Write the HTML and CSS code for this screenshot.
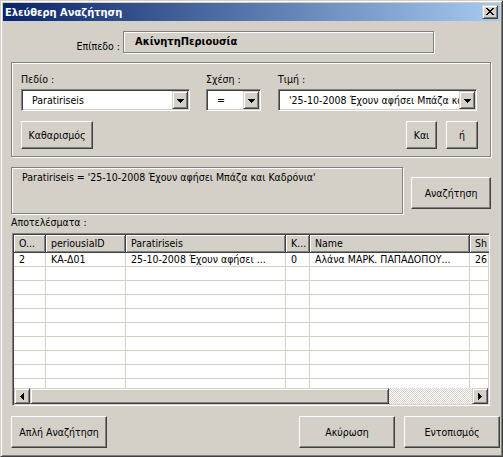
FILE: index.html
```html
<!DOCTYPE html>
<html lang="el">
<head>
  <meta charset="UTF-8" />
  <title>Ελεύθερη Αναζήτηση</title>
  <link rel="stylesheet" href="styles.css">
</head>
<body>
  <div class="window">
    <div class="titlebar">
      <span class="title">Ελεύθερη Αναζήτηση</span>
      <span class="close">
        <svg width="8" height="7" viewBox="0 0 8 7"><path d="M0 0h2v1h-2zM6 0h2v1h-2zM1 1h2v1h-2zM5 1h2v1h-2zM2 2h4v1h-4zM3 3h2v1h-2zM2 4h4v1h-4zM1 5h2v1h-2zM5 5h2v1h-2zM0 6h2v1h-2zM6 6h2v1h-2z"/></svg>
      </span>
    </div>

    <div class="client">
      <div class="level-row">
        <span class="level-label">Επίπεδο :</span>
        <div class="level-box">ΑκίνητηΠεριουσία</div>
      </div>

      <div class="criteria">
        <div class="fields">
          <div class="field">
            <div class="field-label">Πεδίο :</div>
            <div class="combo combo-field">
              <span class="combo-value">Paratiriseis</span>
              <span class="combo-btn"><svg width="7" height="4" viewBox="0 0 7 4"><path d="M0 0H7V1H6V2H5V3H4V4H3V3H2V2H1V1H0Z"/></svg></span>
            </div>
          </div>
          <div class="field">
            <div class="field-label">Σχέση :</div>
            <div class="combo combo-rel">
              <span class="combo-value">=</span>
              <span class="combo-btn"><svg width="7" height="4" viewBox="0 0 7 4"><path d="M0 0H7V1H6V2H5V3H4V4H3V3H2V2H1V1H0Z"/></svg></span>
            </div>
          </div>
          <div class="field">
            <div class="field-label">Τιμή :</div>
            <div class="combo combo-value-box">
              <span class="combo-value">'25-10-2008 Έχουν αφήσει Μπάζα και Καδρόνια'</span>
              <span class="combo-btn"><svg width="7" height="4" viewBox="0 0 7 4"><path d="M0 0H7V1H6V2H5V3H4V4H3V3H2V2H1V1H0Z"/></svg></span>
            </div>
          </div>
        </div>
        <div class="actions">
          <button class="btn btn-clear">Καθαρισμός</button>
          <button class="btn btn-and">Και</button>
          <button class="btn btn-or">ή</button>
        </div>
      </div>

      <div class="query-row">
        <div class="query">Paratiriseis = '25-10-2008 Έχουν αφήσει Μπάζα και Καδρόνια'</div>
        <button class="btn btn-search">Αναζήτηση</button>
      </div>

      <div class="results-label">Αποτελέσματα :</div>

      <div class="list">
        <div class="list-head">
          <div class="hcell">O...</div>
          <div class="hcell">periousiaID</div>
          <div class="hcell">Paratiriseis</div>
          <div class="hcell">K...</div>
          <div class="hcell">Name</div>
          <div class="hcell">Sh</div>
        </div>
        <div class="list-body">
          <div class="lrow"><div>2</div><div>ΚΑ-Δ01</div><div>25-10-2008 Έχουν αφήσει ...</div><div>0</div><div>Αλάνα ΜΑΡΚ. ΠΑΠΑΔΟΠΟΥ...</div><div>26</div></div>
          <div class="lrow"><div></div><div></div><div></div><div></div><div></div><div></div></div>
          <div class="lrow"><div></div><div></div><div></div><div></div><div></div><div></div></div>
          <div class="lrow"><div></div><div></div><div></div><div></div><div></div><div></div></div>
          <div class="lrow"><div></div><div></div><div></div><div></div><div></div><div></div></div>
          <div class="lrow"><div></div><div></div><div></div><div></div><div></div><div></div></div>
          <div class="lrow"><div></div><div></div><div></div><div></div><div></div><div></div></div>
          <div class="lrow"><div></div><div></div><div></div><div></div><div></div><div></div></div>
          <div class="lrow"><div></div><div></div><div></div><div></div><div></div><div></div></div>
          <div class="lrow"><div></div><div></div><div></div><div></div><div></div><div></div></div>
        </div>
        <div class="hscroll">
          <span class="sb-btn"><svg width="4" height="7" viewBox="0 0 4 7"><path d="M4 0V7H3V6H2V5H1V4H0V3H1V2H2V1H3V0Z"/></svg></span>
          <span class="sb-thumb"></span>
          <span class="sb-track"></span>
          <span class="sb-btn"><svg width="4" height="7" viewBox="0 0 4 7"><path d="M0 0V7H1V6H2V5H3V4H4V3H3V2H2V1H1V0Z"/></svg></span>
        </div>
      </div>

      <div class="footer">
        <button class="btn btn-foot">Απλή Αναζήτηση</button>
        <button class="btn btn-foot btn-cancel">Ακύρωση</button>
        <button class="btn btn-foot">Εντοπισμός</button>
      </div>
    </div>
  </div>
</body>
</html>
```

FILE: styles.css
```css
:root {
  --face: #d4d0c8;
  --shadow: #808080;
  --dark: #404040;
  --light: #ffffff;
}

* {
  box-sizing: border-box;
}

body {
  margin: 0;
  background: var(--face);
  font-family: "DejaVu Sans Condensed", "Liberation Sans", Arial, sans-serif;
  font-size: 10.5px;
  color: #000;
}

.window {
  width: 503px;
  height: 457px;
  padding: 2px;
  background: var(--face);
  border: 1px solid;
  border-color: var(--face) var(--dark) var(--dark) var(--face);
  box-shadow: inset 1px 1px 0 var(--light), inset -1px -1px 0 var(--shadow);
  display: flex;
  flex-direction: column;
}

/* title bar */
.titlebar {
  height: 18px;
  padding-left: 2px;
  display: flex;
  align-items: center;
  background: linear-gradient(to right, #0a246a, #a6caf0);
}

.title {
  color: #fff;
  font-weight: bold;
  font-size: 11px;
}

.close {
  width: 16px;
  height: 14px;
  margin-left: auto;
  margin-right: 2px;
  padding-bottom: 1px;
  display: flex;
  align-items: center;
  justify-content: center;
}

/* raised 3d look shared by buttons */
.close,
.combo-btn,
.sb-btn,
.sb-thumb,
.btn {
  background: var(--face);
  border: 1px solid;
  border-color: var(--face) var(--dark) var(--dark) var(--face);
  box-shadow: inset 1px 1px 0 var(--light), inset -1px -1px 0 var(--shadow);
}

.btn {
  border-color: var(--light) var(--dark) var(--dark) var(--light);
  box-shadow: inset -1px -1px 0 var(--shadow);
  font-family: inherit;
  font-size: 10.5px;
  color: #000;
  padding: 0;
}

/* client area */
.client {
  flex: 1;
  padding-left: 8px;
  display: flex;
  flex-direction: column;
}

.level-row {
  margin-top: 10px;
  display: flex;
  align-items: flex-start;
}

.level-label {
  width: 112px;
  padding-right: 3px;
  margin-top: 9px;
  line-height: 13px;
  text-align: right;
}

.level-box,
.criteria,
.query {
  border: 1px solid var(--shadow);
  box-shadow: 1px 1px 0 var(--light), inset 1px 1px 0 var(--light);
}

.level-box {
  width: 311px;
  height: 22px;
  padding: 3px 11px 0;
  line-height: 13px;
  font-size: 11px;
  font-weight: bold;
}

/* criteria group */
.criteria {
  margin-top: 9px;
  width: 480px;
  height: 95px;
  padding: 10px 12px 0 9px;
}

.fields {
  display: flex;
  gap: 16px;
}

.field-label {
  line-height: 13px;
  margin-bottom: 3px;
}

.combo {
  height: 22px;
  display: flex;
  background: #fff;
  border: 1px solid;
  border-color: var(--shadow) var(--light) var(--light) var(--shadow);
  box-shadow: inset 1px 1px 0 var(--dark), inset -1px -1px 0 var(--face);
  padding: 1px;
}

.combo-field { width: 169px; }
.combo-rel { width: 55px; margin-right: 1px; }
.combo-value-box { width: 199px; }

.combo-value {
  flex: 1;
  min-width: 0;
  padding-left: 9px;
  line-height: 18px;
  white-space: nowrap;
  overflow: hidden;
}

.combo-btn {
  width: 16px;
  height: 18px;
  flex-shrink: 0;
  display: flex;
  align-items: center;
  justify-content: center;
  padding-top: 1px;
}

.actions {
  margin-top: 10px;
  display: flex;
  gap: 9px;
}

.btn-clear { width: 72px; height: 28px; }
.btn-and { width: 31px; height: 28px; margin-left: auto; }
.btn-or { width: 32px; height: 28px; }

/* query line */
.query-row {
  margin-top: 10px;
  display: flex;
  gap: 8px;
  align-items: flex-start;
}

.query {
  width: 392px;
  height: 47px;
  padding: 3px 10px;
  line-height: 13px;
  white-space: nowrap;
}

.btn-search {
  width: 80px;
  height: 32px;
  margin-top: 10px;
}

.results-label {
  margin-top: 2px;
  line-height: 13px;
}

/* list view */
.list {
  margin-top: 4px;
  margin-left: 1px;
  width: 478px;
  height: 173px;
  background: #fff;
  border: 1px solid;
  border-color: var(--shadow) var(--light) var(--light) var(--shadow);
  box-shadow: inset 1px 1px 0 var(--dark), inset -1px -1px 0 var(--face);
  padding: 1px;
  display: flex;
  flex-direction: column;
  overflow: hidden;
}

.list-head,
.lrow {
  display: grid;
  grid-template-columns: 32px 80px 160px 24px 160px 60px;
  width: 516px;
}

.hcell {
  height: 18px;
  padding: 0 4px 0 5px;
  line-height: 17px;
  white-space: nowrap;
  overflow: hidden;
  background: var(--face);
  border-right: 1px solid var(--dark);
  border-bottom: 1px solid var(--dark);
  box-shadow: inset 1px 1px 0 var(--light), inset -1px -1px 0 var(--shadow);
}

.list-body {
  height: 135px;
  overflow: hidden;
}

.lrow {
  height: 14px;
  border-bottom: 1px solid var(--face);
}

.lrow div {
  padding-left: 5px;
  line-height: 13px;
  white-space: nowrap;
  overflow: hidden;
  border-right: 1px solid var(--face);
}

.hscroll {
  height: 16px;
  width: 474px;
  display: flex;
}

.sb-btn {
  width: 16px;
  flex-shrink: 0;
  display: flex;
  align-items: center;
  justify-content: center;
}

.sb-thumb {
  width: 359px;
}

.sb-track {
  flex: 1;
  background: repeating-conic-gradient(var(--face) 0 25%, #fff 0 50%) 0 0 / 2px 2px;
}

/* footer buttons */
.footer {
  margin-top: 10px;
  display: flex;
  gap: 8px;
}

.btn-foot {
  width: 96px;
  height: 32px;
}

.btn-cancel {
  margin-left: auto;
  margin-right: 1px;
}
```
